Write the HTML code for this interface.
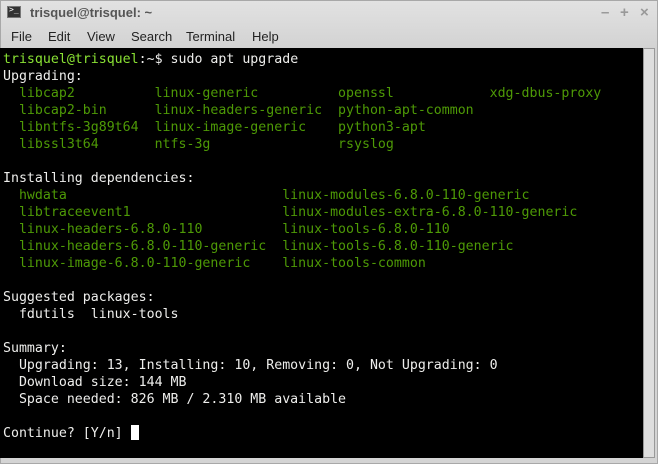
<!DOCTYPE html>
<html><head><meta charset="utf-8"><style>
html,body{margin:0;padding:0;width:658px;height:464px;overflow:hidden;background:#d4d4d4;font-family:"Liberation Sans",sans-serif}
.win{position:absolute;left:0;top:0;width:656px;height:462px;border:1px solid #a8a8a8;background:linear-gradient(#e2e2e2,#d2d2d2 48px,#d4d4d4)}
.title{position:absolute;left:0;top:0;height:24px;width:656px}
.icon{position:absolute;left:6px;top:5px;width:14px;height:12px;background:#333;border:1px solid #777;box-sizing:border-box}
.icon:after{content:">_";position:absolute;left:1px;top:-2px;color:#fff;font:8px "DejaVu Sans Mono",monospace}
.ttext{position:absolute;left:29px;top:4px;font-size:13px;font-weight:bold;color:#555}
.ctl{position:absolute;top:3px;color:#999;font-size:15px;font-weight:bold}
.menu{position:absolute;top:28px;left:10px;font-size:13px;color:#222}
.menu span{position:absolute;white-space:nowrap}
.term{position:absolute;left:0;top:48px;width:643px;height:410px;background:#000}
.sb{position:absolute;left:643px;top:48px;width:12px;height:410px;background:#dedede;border:1px solid #999;box-sizing:border-box}
pre{position:absolute;left:3px;top:51px;margin:0;font:13.25px/17px "DejaVu Sans Mono",monospace;color:#eeeeec}
.g{color:#4e9a06}.p{color:#8ae234}
.cur{display:inline-block;width:8px;height:15px;background:#fff;vertical-align:-3px}
</style></head><body>
<div class="win">
<div class="title"><div class="icon"></div><div class="ttext">trisquel@trisquel: ~</div>
<div class="ctl" style="left:600px">–</div><div class="ctl" style="left:619px">+</div><div class="ctl" style="left:639px">×</div></div>
<div class="menu"><span style="left:0">File</span><span style="left:37px">Edit</span><span style="left:76px">View</span><span style="left:120px">Search</span><span style="left:175px">Terminal</span><span style="left:241px">Help</span></div>
</div>
<div class="term"></div><div class="sb"></div>
<pre><span class="p">trisquel@trisquel</span>:~$ sudo apt upgrade
Upgrading:
<span class="g">  libcap2          linux-generic          openssl            xdg-dbus-proxy
  libcap2-bin      linux-headers-generic  python-apt-common
  libntfs-3g89t64  linux-image-generic    python3-apt
  libssl3t64       ntfs-3g                rsyslog</span>

Installing dependencies:
<span class="g">  hwdata                           linux-modules-6.8.0-110-generic
  libtraceevent1                   linux-modules-extra-6.8.0-110-generic
  linux-headers-6.8.0-110          linux-tools-6.8.0-110
  linux-headers-6.8.0-110-generic  linux-tools-6.8.0-110-generic
  linux-image-6.8.0-110-generic    linux-tools-common</span>

Suggested packages:
  fdutils  linux-tools

Summary:
  Upgrading: 13, Installing: 10, Removing: 0, Not Upgrading: 0
  Download size: 144 MB
  Space needed: 826 MB / 2.310 MB available

Continue? [Y/n] <span class="cur"></span></pre>
</body></html>
